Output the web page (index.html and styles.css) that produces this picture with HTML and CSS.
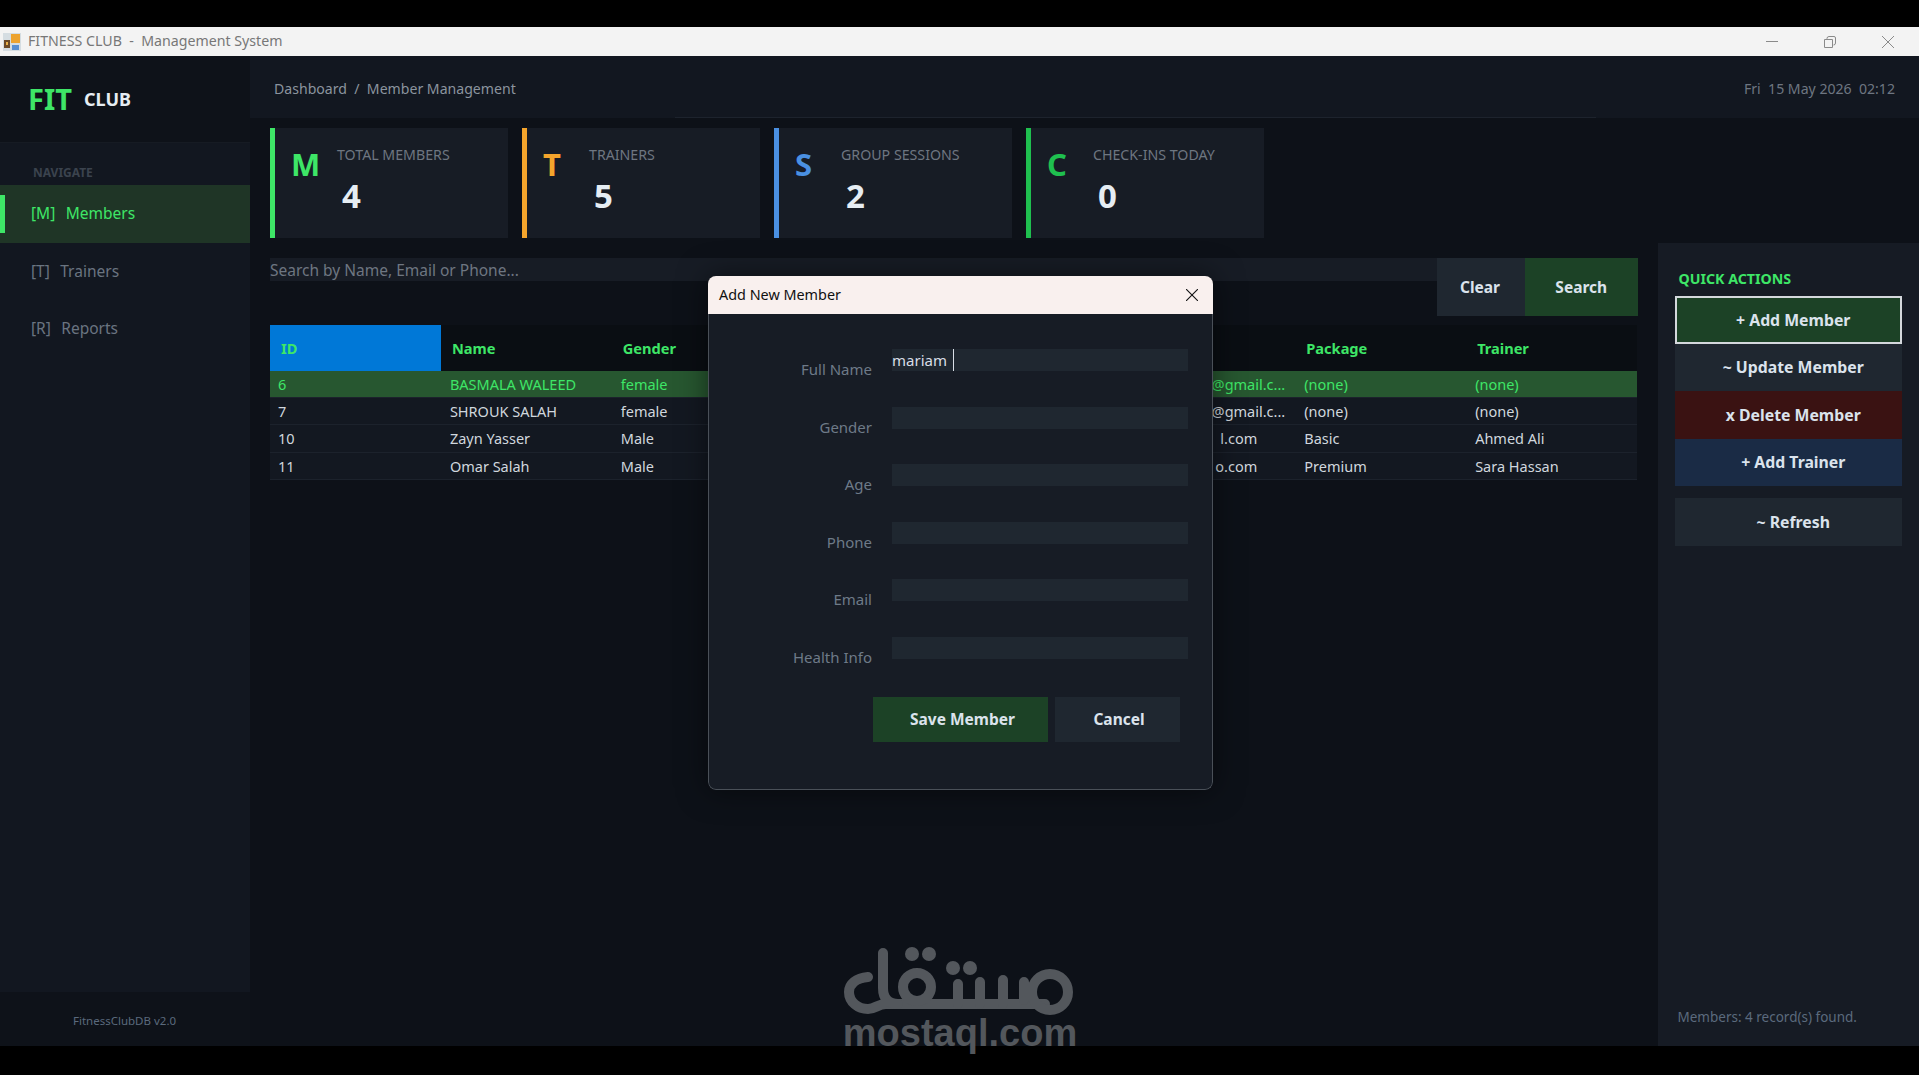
FILE: index.html
```html
<!DOCTYPE html>
<html>
    <head>
        <title>Fitness Club - Management System</title>
        <meta charset="UTF-8">
        <link rel="stylesheet" href="styles.css">
    </head>

    <body>
        <div id="finestra">

            <div class="titlebar">
                <svg class="app-icon" width="18" height="18" viewBox="0 0 18 18">
                    <rect width="18" height="18" fill="#d5dde2"/>
                    <rect x="8" y="1" width="9" height="9" fill="#eda32f"/>
                    <rect x="1" y="7" width="6" height="8" fill="#6b4a28"/>
                    <rect x="9" y="12" width="7" height="5" fill="#5a8fd0"/>
                    <rect x="3" y="9" width="2" height="3" fill="#e8b04a"/>
                </svg>
                <span class="title-text">FITNESS CLUB &nbsp;-&nbsp; Management System</span>
                <div class="win-controls">
                    <svg width="12" height="12" viewBox="0 0 12 12"><path d="M0 5.500H12" stroke="#8a8a8a" fill="none"/></svg>
                    <svg width="12" height="12" viewBox="0 0 12 12"><path d="M.5 3.500h8v8h-8zM3 3.500V2.500q0-2 2-2h5q1.500 0 1.500 1.500v5q0 2-2 2" stroke="#8a8a8a" fill="none"/></svg>
                    <svg width="12" height="12" viewBox="0 0 12 12"><path d="M0 0L12 12M12 0L0 12" stroke="#8a8a8a" fill="none"/></svg>
                </div>
            </div>

            <div class="app">
                <div class="sidebar">
                    <div class="logo"><span class="logo-fit">FIT</span><span class="logo-club">CLUB</span></div>
                    <div class="nav">
                        <div class="nav-title">NAVIGATE</div>
                        <div class="nav-item active">[M]&nbsp; Members</div>
                        <div class="nav-item">[T]&nbsp; Trainers</div>
                        <div class="nav-item">[R]&nbsp; Reports</div>
                    </div>
                    <div class="side-foot">FitnessClubDB v2.0</div>
                </div>

                <div class="main">
                    <div class="topbar">
                        <span>Dashboard &nbsp;/&nbsp; Member Management</span>
                        <span class="clock">Fri &nbsp;15 May 2026 &nbsp;02:12</span>
                    </div>

                    <div class="stats">
                        <div class="stat verde">
                            <div class="stat-letter">M</div>
                            <div><div class="stat-label">TOTAL MEMBERS</div><div class="stat-value">4</div></div>
                        </div>
                        <div class="stat arancio">
                            <div class="stat-letter">T</div>
                            <div><div class="stat-label">TRAINERS</div><div class="stat-value">5</div></div>
                        </div>
                        <div class="stat blu">
                            <div class="stat-letter">S</div>
                            <div><div class="stat-label">GROUP SESSIONS</div><div class="stat-value">2</div></div>
                        </div>
                        <div class="stat verde2">
                            <div class="stat-letter">C</div>
                            <div><div class="stat-label">CHECK-INS TODAY</div><div class="stat-value">0</div></div>
                        </div>
                    </div>

                    <div class="lower">
                        <div class="work">
                            <div class="search">
                                <div class="search-box">Search by Name, Email or Phone...</div>
                                <div class="btn btn-clear">Clear</div>
                                <div class="btn btn-search">Search</div>
                            </div>

                            <table class="members">
                                <thead>
                                    <tr>
                                        <th class="sel">ID</th><th>Name</th><th>Gender</th><th>Age</th>
                                        <th>Phone</th><th>Email</th><th>Package</th><th>Trainer</th>
                                    </tr>
                                </thead>
                                <tbody>
                                    <tr class="on">
                                        <td>6</td><td>BASMALA WALEED</td><td>female</td><td></td>
                                        <td></td><td class="mail">@gmail.c...</td><td>(none)</td><td>(none)</td>
                                    </tr>
                                    <tr>
                                        <td>7</td><td>SHROUK SALAH</td><td>female</td><td></td>
                                        <td></td><td class="mail">@gmail.c...</td><td>(none)</td><td>(none)</td>
                                    </tr>
                                    <tr>
                                        <td>10</td><td>Zayn Yasser</td><td>Male</td><td></td>
                                        <td></td><td class="mail corta">l.com</td><td>Basic</td><td>Ahmed Ali</td>
                                    </tr>
                                    <tr>
                                        <td>11</td><td>Omar Salah</td><td>Male</td><td></td>
                                        <td></td><td class="mail corta">o.com</td><td>Premium</td><td>Sara Hassan</td>
                                    </tr>
                                </tbody>
                            </table>
                        </div>

                        <div class="actions">
                            <div class="actions-title">QUICK ACTIONS</div>
                            <div class="btn act act-add">+ Add Member</div>
                            <div class="btn act act-grey">~ Update Member</div>
                            <div class="btn act act-del">x Delete Member</div>
                            <div class="btn act act-trainer">+ Add Trainer</div>
                            <div class="btn act act-grey act-refresh">~ Refresh</div>
                            <div class="status">Members: 4 record(s) found.</div>
                        </div>
                    </div>
                </div>
            </div>

            <div class="dialog">
                <div class="dialog-head">
                    <span>Add New Member</span>
                    <svg width="12" height="12" viewBox="0 0 12 12"><path d="M0 0L12 12M12 0L0 12" stroke="#111" stroke-width="1.100" fill="none"/></svg>
                </div>
                <div class="dialog-body">
                    <div class="row"><label>Full Name</label><div class="field"><span>mariam</span><span class="caret"></span></div></div>
                    <div class="row"><label>Gender</label><div class="field"></div></div>
                    <div class="row"><label>Age</label><div class="field"></div></div>
                    <div class="row"><label>Phone</label><div class="field"></div></div>
                    <div class="row"><label>Email</label><div class="field"></div></div>
                    <div class="row"><label>Health Info</label><div class="field"></div></div>
                    <div class="dialog-btns">
                        <div class="btn btn-save">Save Member</div>
                        <div class="btn btn-cancel">Cancel</div>
                    </div>
                </div>
            </div>

            <div class="watermark">
                <svg width="240" height="80" viewBox="0 0 240 80">
                    <g fill="none" stroke="#53575c" stroke-width="10" stroke-linecap="round">
                        <path d="M28 37C16 38 9 44 9 52C9 62 18 69 28 69C35 69 38 64 46 64H205"/>
                        <path d="M43 13V48C43 58 48 64 58 64"/>
                        <circle cx="77" cy="47" r="14"/>
                        <circle cx="210" cy="52" r="18"/>
                        <path d="M118 44V64M140 42V64M163 40V64M184 42V60"/>
                    </g>
                    <g fill="#53575c">
                        <circle cx="72" cy="14" r="7"/>
                        <circle cx="89" cy="14" r="7"/>
                        <circle cx="113" cy="28" r="7"/>
                        <circle cx="130" cy="28" r="7"/>
                    </g>
                </svg>
                <div class="wm-text">mostaql.com</div>
            </div>

        </div>
    </body>
</html>
```

FILE: styles.css
```css
* { box-sizing: border-box; }

body {
    margin: 0;
    background: black;
    font-family: "Noto Sans", sans-serif;
    font-size: 14.5px;
    overflow: hidden;
}

#finestra {
    position: relative;
    width: 1919px;
    height: 1075px;
    padding: 27px 0 29px;
    display: flex;
    flex-direction: column;
}

.titlebar {
    height: 29px;
    flex: none;
    background: #f3f3f3;
    display: flex;
    align-items: center;
    padding-left: 3px;
    color: #777;
    font-size: 14.2px;
}

.title-text { margin: 0 0 2px 7px; }

.win-controls {
    margin-left: auto;
    display: flex;
    gap: 46px;
    padding-right: 25px;
}

.app {
    flex: 1;
    display: flex;
    min-height: 0;
    background: #0d1118;
}

/* barra laterale */

.sidebar {
    width: 250px;
    flex: none;
    display: flex;
    flex-direction: column;
}

.logo {
    height: 87px;
    padding-left: 28px;
    display: flex;
    align-items: center;
    gap: 12px;
    border-bottom: 1px solid #161b23;
    background: #0e1219;
}

.logo-fit {
    font-size: 29px;
    line-height: 36px;
    font-weight: bold;
    color: #3ee667;
}

.logo-club {
    font-size: 18px;
    font-weight: bold;
    color: #e6edf3;
}

.nav {
    flex: 1;
    background: #121720;
    padding-top: 19px;
}

.nav-title {
    font-size: 12px;
    line-height: 22px;
    padding-left: 33px;
    margin-bottom: 1px;
    color: #3b434e;
    font-weight: bold;
}

.nav-item {
    position: relative;
    height: 57.500px;
    line-height: 57px;
    padding-left: 31px;
    font-size: 15.500px;
    word-spacing: 1.200px;
    color: #6a7480;
}

.nav-item.active {
    background: #1f3526;
    color: #3ee667;
}

.nav-item.active::before {
    content: "";
    position: absolute;
    left: 0; top: 10px; bottom: 10px;
    width: 5px;
    background: #3ee667;
}

.side-foot {
    height: 54px;
    flex: none;
    padding-left: 73px;
    padding-top: 20px;
    font-size: 11.500px;
    line-height: 18px;
    color: #5b6a7d;
    background: #0e1219;
}

/* parte centrale */

.main {
    flex: 1;
    display: flex;
    flex-direction: column;
    min-width: 0;
}

.topbar {
    height: 62px;
    flex: none;
    display: flex;
    justify-content: space-between;
    align-items: center;
    padding: 2px 24px 0;
    font-size: 14.100px;
    color: #8b949e;
    background: linear-gradient(#1d232d, #1d232d) 425px 100% / 921px 1px no-repeat, #121720;
}

.clock { color: #6e7681; }

.stats {
    display: flex;
    gap: 14px;
    padding: 10px 0 5px 20px;
    flex: none;
}

.stat {
    width: 238px;
    height: 110px;
    background: #171c25;
    border-left: 5px solid;
    display: flex;
    padding: 13px 0 0 16px;
}

.stat-letter {
    width: 46px;
    font-size: 31px;
    line-height: 44px;
    padding-top: 1px;
    font-weight: bold;
}

.stat-label {
    font-size: 14.200px;
    line-height: 28px;
    color: #6e7681;
}

.stat-value {
    font-size: 33px;
    line-height: 54px;
    padding-left: 5px;
    font-weight: bold;
    color: #e6edf3;
}

.verde { border-color: #3ee667; }
.verde .stat-letter { color: #3ee667; }
.arancio { border-color: #f5a52c; }
.arancio .stat-letter { color: #f5a52c; }
.blu { border-color: #4a90e2; }
.blu .stat-letter { color: #4a90e2; }
.verde2 { border-color: #1fc04f; }
.verde2 .stat-letter { color: #1fc04f; }

.lower {
    flex: 1;
    display: flex;
    min-height: 0;
}

.work {
    width: 1407.500px;
    flex: none;
    padding: 15px 20px 0;
}

.search {
    display: flex;
    height: 58px;
}

.search-box {
    flex: 1;
    height: 23px;
    background: #171c25;
    color: #6e7681;
    font-size: 15.500px;
    line-height: 25px;
}

.btn {
    display: flex;
    align-items: center;
    justify-content: center;
    font-size: 15.500px;
    font-weight: bold;
    color: #dbe3ec;
}

.btn-clear { width: 88px; background: #1f2730; padding-right: 2px; }
.btn-search { width: 112.500px; background: #1c4226; }

table.members {
    width: 1367px;
    margin-top: 9px;
    border-collapse: collapse;
    table-layout: fixed;
}

.members th {
    height: 46px;
    background: #0a0e13;
    color: #3ee667;
    font-size: 14.600px;
    text-align: left;
    padding: 0 0 0 11px;
}

.members th.sel { background: #0078d7; }

.members td {
    height: 27.500px;
    padding: 0 0 0 9px;
    background: #131821;
    color: #d0d7de;
    border-bottom: 1px solid #1c222c;
}

.members td:first-child { padding-left: 8px; }

.members td.mail { text-align: right; padding-right: 10px; }
.members td.corta { padding-right: 38px; }

.members tr.on td {
    height: 26px;
    background: #275730;
    color: #3ee667;
}

/* azioni a destra */

.actions {
    flex: 1;
    background: #161b24;
    padding: 25px 17px 0;
    display: flex;
    flex-direction: column;
}

.actions-title {
    font-size: 14.200px;
    line-height: 22px;
    font-weight: bold;
    color: #3ee667;
    padding-left: 4px;
    margin-bottom: 6px;
}

.act { height: 47.500px; flex: none; padding-left: 10px; font-size: 15.800px; }
.act-add { background: #1c4226; border: 2px solid #d4d8dc; }
.act-grey { background: #1f2730; }
.act-del { background: #3a1212; }
.act-trainer { background: #1a2b45; }
.act-refresh { margin-top: 12px; }

.status {
    margin-top: auto;
    padding: 0 0 19px 3px;
    font-size: 13.500px;
    line-height: 20px;
    color: #5b6a7d;
}

/* finestra di dialogo */

.dialog {
    position: absolute;
    left: 708px; top: 276px;
    width: 505px;
    height: 514px;
    border-radius: 8px;
    overflow: hidden;
    box-shadow: 0 0 30px rgba(0, 0, 0, .5);
}

.dialog-head {
    height: 38px;
    background: #f9f0ee;
    display: flex;
    justify-content: space-between;
    align-items: center;
    padding: 0 15px 1px 11px;
    color: #111;
    font-size: 14.400px;
}

.dialog-body {
    height: 476px;
    background: #171c25;
    border: 1px solid #4a5058;
    border-top: none;
    border-radius: 0 0 8px 8px;
    padding-top: 35px;
}

.row {
    display: grid;
    grid-template-columns: 163px 296px;
    gap: 20px;
    height: 57.500px;
}

.row label {
    text-align: right;
    font-size: 15px;
    line-height: 22px;
    padding-top: 9px;
    color: #6e7a88;
}

.field {
    height: 22px;
    background: #1f2730;
    color: #d8dee6;
    font-size: 15px;
    line-height: 22px;
    display: flex;
}

.caret {
    width: 1px;
    margin-left: 6px;
    background: #d8dee6;
}

.dialog-btns {
    display: flex;
    gap: 7px;
    margin-top: 3px;
    padding-left: 164px;
}

.btn-save { width: 175px; height: 45px; background: #1c4226; padding: 0 0 2px 4px; }
.btn-cancel { width: 125px; height: 45px; background: #1f2730; padding: 0 0 2px 3px; }

/* filigrana */

.watermark {
    position: absolute;
    left: 840px; top: 940px;
    width: 240px;
}

.watermark svg { display: block; }

.wm-text {
    margin-top: -7px;
    text-align: center;
    font-family: "Liberation Sans", sans-serif;
    font-size: 38px;
    line-height: 40px;
    font-weight: bold;
    color: #53575c;
}
```
